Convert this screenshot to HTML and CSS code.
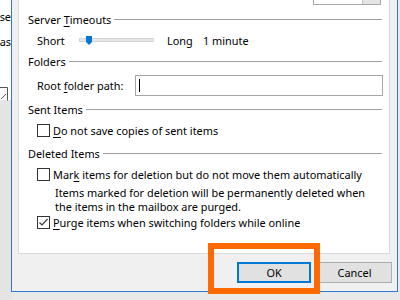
FILE: index.html
```html
<!DOCTYPE html>
<html>
<head>
  <title>Advanced Options</title>
  <link rel="stylesheet" href="styles.css">
</head>
<body>
  <div class="screen">
    <div class="behind">
      <div class="behind-text"><span><u>U</u>se</span></div>
      <div class="behind-text second"><span>as</span></div>
      <svg class="behind-icon" width="9" height="14" viewBox="0 0 9 14">
        <path d="M0.5 0.5 H8.5 V13.5" fill="none" stroke="#555" stroke-width="1"/>
        <path d="M2 12 L7 7" stroke="#555" stroke-width="1"/>
      </svg>
    </div>

    <div class="dialog">
      <div class="panel">
        <div class="top-row">
          <div class="combo"><span class="combo-btn"></span></div>
        </div>

        <div class="group-head"><span>Server <u>T</u>imeouts</span></div>
        <div class="slider-row">
          <span class="short">Short</span>
          <span class="track">
            <svg class="thumb" width="6" height="9" viewBox="0 0 6 9">
              <polygon points="0,0 6,0 6,6 3,9 0,6" fill="#0078d7"/>
            </svg>
          </span>
          <span class="long">Long</span>
          <span>1 minute</span>
        </div>

        <div class="group-head"><span>Folders</span></div>
        <div class="folder-row">
          <label class="folder-label" for="rootPath">Root <u>f</u>older path:</label>
          <div class="text-input" id="rootPath"><span class="caret"></span></div>
        </div>

        <div class="group-head sent"><span>Sent Items</span></div>
        <div class="check-row first">
          <span class="box"></span>
          <span><u>D</u>o not save copies of sent items</span>
        </div>

        <div class="group-head deleted"><span>Deleted Items</span></div>
        <div class="check-row mark">
          <span class="box"></span>
          <span>Mar<u>k</u> items for deletion but do not move them automatically</span>
        </div>
        <div class="note">
          Items marked for deletion will be permanently deleted when<br>
          the items in the mailbox are purged.
        </div>
        <div class="check-row purge">
          <span class="box">
            <svg width="11" height="11" viewBox="0 0 11 11">
              <polyline points="1.5,5.5 4,8 9.5,2" fill="none" stroke="#3a3a3a" stroke-width="1.2"/>
            </svg>
          </span>
          <span><u>P</u>urge items when switching folders while online</span>
        </div>
      </div>

      <div class="buttons">
        <button class="btn default">OK</button>
        <button class="btn">Cancel</button>
      </div>

      <div class="highlight"></div>
    </div>
  </div>
</body>
</html>
```

FILE: styles.css
```css
body {
  margin: 0;
  padding: 0;
  width: 400px;
  height: 300px;
  overflow: hidden;
  background-color: #e9e9e9;
  font-family: "Noto Sans", "Open Sans", sans-serif;
  font-size: 10.9px;
  color: #000;
}

u {
  text-decoration-thickness: 1px;
  text-underline-offset: 2px;
}

.screen {
  display: flex;
  height: 300px;
}

/* window behind the dialog */
.behind {
  width: 11px;
  flex-shrink: 0;
  overflow: hidden;
  background: linear-gradient(#ffffff 0, #ffffff 100px, #e4e4e4 100px);
}

.behind-text {
  display: flex;
  justify-content: flex-end;
  white-space: nowrap;
  height: 14px;
  line-height: 14px;
  margin-top: 10px;
}

.behind-text.second {
  margin-top: 11px;
}

.behind-icon {
  display: block;
  margin-top: 38px;
  margin-left: -1px;
}

/* dialog */
.dialog {
  position: relative;
  width: 387px;
  height: 292px;
  box-sizing: border-box;
  flex-shrink: 0;
  background-color: #f0f0f0;
  border-left: 1px solid #2b7ad3;
  border-right: 1px solid #2b7ad3;
  border-bottom: 1px solid #2b7ad3;
}

.panel {
  width: 372px;
  height: 254px;
  box-sizing: border-box;
  margin-left: 6px;
  padding: 0 7px 0 9px;
  background-color: #fff;
  border-left: 1px solid #d9d9d9;
  border-right: 1px solid #d9d9d9;
  border-bottom: 1px solid #d9d9d9;
  display: flex;
  flex-direction: column;
}

.top-row {
  height: 5px;
  display: flex;
  justify-content: flex-end;
  align-items: flex-end;
}

.combo {
  width: 68px;
  height: 20px;
  flex-shrink: 0;
  box-sizing: border-box;
  margin-right: 1px;
  border: 1px solid #a8a8a8;
  display: flex;
  justify-content: flex-end;
}

.combo-btn {
  width: 17px;
  background-color: #e5e5e5;
  border-left: 1px solid #c4c4c4;
}

.group-head {
  display: flex;
  align-items: center;
  height: 14px;
  line-height: 14px;
  margin-top: 8px;
  white-space: nowrap;
}

.group-head::after {
  content: "";
  flex: 1;
  margin-left: 3px;
  margin-top: -1px;
  border-top: 1px solid #a0a0a0;
}

.slider-row {
  display: flex;
  align-items: center;
  height: 20px;
  margin-top: 3px;
  padding-left: 9px;
}

.short {
  width: 42px;
}

.track {
  position: relative;
  width: 75px;
  height: 4px;
  box-sizing: border-box;
  background-color: #e7e7e7;
  border: 1px solid #d6d6d6;
  margin-right: 13px;
}

.thumb {
  position: absolute;
  left: 6px;
  top: -3px;
}

.long {
  width: 36px;
}

.group-head + .folder-row {
  margin-top: 6px;
}

.slider-row + .group-head {
  margin-top: 5px;
}

.folder-row {
  display: flex;
  align-items: center;
  height: 21px;
  padding-left: 9px;
}

.folder-label {
  width: 98px;
}

.text-input {
  flex: 1;
  height: 21px;
  box-sizing: border-box;
  margin-right: -1px;
  border: 1px solid #a6a6a6;
  padding: 3px 0 0 3px;
}

.caret {
  display: block;
  width: 1px;
  height: 13px;
  background-color: #000;
}

.group-head.sent {
  margin-top: 7px;
}

.check-row {
  display: flex;
  align-items: center;
  height: 15px;
  line-height: 15px;
  padding-left: 9px;
  white-space: nowrap;
}

.check-row.first {
  margin-top: 6px;
}

.group-head.deleted {
  margin-top: 9px;
}

.check-row.mark {
  margin-top: 6px;
}

.check-row.purge {
  margin-top: 1px;
}

.box {
  width: 13px;
  height: 13px;
  box-sizing: border-box;
  flex-shrink: 0;
  border: 1px solid #333;
  background-color: #fff;
  margin-right: 3px;
}

.box svg {
  display: block;
}

.note {
  margin-top: 4px;
  padding-left: 27px;
  line-height: 14px;
  white-space: nowrap;
}

.buttons {
  display: flex;
  justify-content: flex-end;
  gap: 6px;
  margin-top: 8px;
  padding-right: 5px;
}

.btn {
  height: 21px;
  box-sizing: border-box;
  padding: 0;
  font-family: inherit;
  font-size: 10.9px;
  color: #000;
  background-color: #e1e1e1;
  border: 1px solid #adadad;
  width: 75px;
}

.btn.default {
  width: 74px;
  border: 2px solid #0078d7;
}

.highlight {
  position: absolute;
  left: 196px;
  top: 243px;
  width: 112px;
  height: 51px;
  box-sizing: border-box;
  border: 6px solid #ff6a00;
}
```
